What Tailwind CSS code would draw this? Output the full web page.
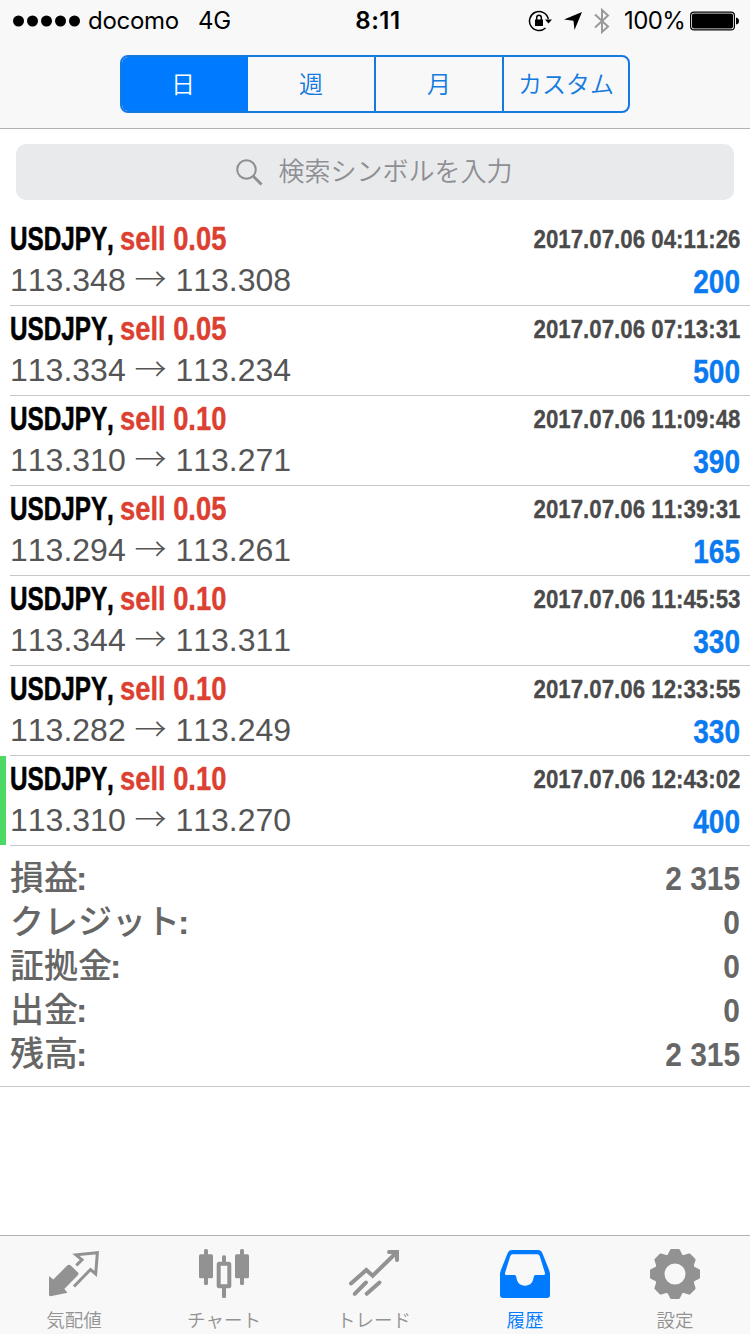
<!DOCTYPE html>
<html lang="ja">
<head>
  <meta charset="UTF-8" />
  <meta name="viewport" content="width=device-width, initial-scale=1" />
  <title>履歴</title>
  <script src="https://cdn.jsdelivr.net/npm/@tailwindcss/browser@4"></script>
</head>
<body class="w-[750px] h-[1334px] overflow-hidden flex flex-col bg-white font-['Liberation_Sans','Noto_Sans_CJK_JP',sans-serif]">
  <header class="h-[129px] shrink-0 bg-[#f8f8f8] border-b border-[#b2b2b2]">
    <!-- Status bar -->
    <div class="h-10 grid grid-cols-3 text-black font-['Inter',sans-serif] text-[24px] leading-10 whitespace-nowrap">
      <div class="flex items-center pl-[13px]">
        <svg class="w-[68px] h-3 shrink-0" viewBox="0 0 68 12">
          <circle cx="5.5" cy="6" r="5.5" /><circle cx="19.5" cy="6" r="5.5" /><circle cx="33.5" cy="6" r="5.5" /><circle cx="47.5" cy="6" r="5.5" /><circle cx="61.5" cy="6" r="5.5" />
        </svg>
        <span class="ml-[7px] w-[110px] pt-px tracking-[-0.3px]">docomo</span>
        <span class="pt-px tracking-[-0.3px]">4G</span>
      </div>
      <div class="text-center font-semibold pt-px pl-[6px] tracking-[0.5px]">8:11</div>
      <div class="flex items-center justify-end pr-[11px]">
        <svg class="w-6 h-6 shrink-0" viewBox="0 0 24 24" fill="none" stroke="#000" stroke-width="1.5">
          <path d="M17.5 19A9.5 9.5 0 1 1 20.3 10" />
          <path d="M17 10.5h7l-3.500 4z" fill="#000" stroke="none" />
          <rect x="7" y="10.500" width="8" height="6.500" fill="#000" stroke="none" />
          <path d="M8.700 11V8.500a2.300 2.300 0 0 1 4.600 0V11" />
        </svg>
        <svg class="w-[18px] h-[18px] ml-[12px] shrink-0" viewBox="0 0 18 18"><path d="M18 0L10.500 18L9.500 8.800L0 7.500z" /></svg>
        <svg class="w-4 h-[26px] ml-3 shrink-0" viewBox="0 0 16 26" fill="none" stroke="#999" stroke-width="2"><path d="M1 6.500L14 18.500L8 24V2L14 7.500L1 19.500" /></svg>
        <span class="ml-[14px] w-[66px] pt-px tracking-[-0.6px]">100%</span>
        <svg class="w-[49px] h-5 shrink-0" viewBox="0 0 49 20">
          <rect x="0.600" y="1.100" width="43.800" height="17.800" rx="3.500" fill="none" stroke="#000" stroke-width="1.200" />
          <rect x="2" y="2.500" width="41" height="15" rx="2" />
          <path d="M46 6.500q3 0.500 3 3.500t-3 3.500z" />
        </svg>
      </div>
    </div>
    <!-- Period switch -->
    <div class="mt-[15px] mx-auto w-[510px] h-[58px] grid grid-cols-[126px_128px_128px_124px] rounded-[8px] border-2 border-[#147ae0] bg-[#f8f8f8] overflow-hidden text-center text-[24px] leading-[52px] font-[350] text-[#147ae0] font-['Noto_Sans_CJK_JP',sans-serif]">
      <div class="bg-[#007aff] text-white pr-1">日</div>
      <div class="border-r-2 border-[#147ae0]">週</div>
      <div class="border-r-2 border-[#147ae0]">月</div>
      <div>カスタム</div>
    </div>
  </header>

  <div class="mt-[15px] mx-4 h-14 shrink-0 rounded-[10px] bg-[#e9eaec] flex items-center justify-center text-[#8e8e93]">
    <svg class="w-[27px] h-[27px]" viewBox="0 0 27 27" fill="none" stroke="#8e8e93" stroke-width="2"><circle cx="10.500" cy="10.500" r="9.300" /><path d="M17.300 17.300L25.500 25.500" stroke-width="2.800" /></svg>
    <span class="ml-[15px] mr-px text-[26px] font-[350] leading-[52px] pb-1 font-['Noto_Sans_CJK_JP',sans-serif]">検索シンボルを入力</span>
  </div>

  <ul id="deals" class="mt-4 shrink-0"></ul>
  <dl id="summary" class="shrink-0 py-[10px] px-[10px] h-[241px] border-b border-[#c8c7cc] text-[#666]"></dl>

  <nav class="mt-auto h-[99px] shrink-0 bg-[#f8f8f8] border-t border-[#b2b2b2] grid grid-cols-5 text-center text-[18.5px] leading-6 font-[350] text-[#929292] font-['Noto_Sans_CJK_JP',sans-serif]">
    <a class="flex flex-col items-center pt-[13px] pr-0.5">
      <svg class="w-[50px] h-[50px]" viewBox="0 0 50 50" fill="none">
        <path d="M0 27L4.300 30.500L18.500 16.300Q20 15 21.500 16.300L29 23.500Q30 24.700 29 26L15.300 40L18.500 43.700L1.500 47.200Q0 47 0 45.500z" fill="#929292" />
        <path d="M25 37.500L41.500 20.500L46.700 25L48.400 3.700L27 5.800L33 10.800L27.300 16.300" stroke="#929292" stroke-width="3" />
      </svg>
      <span class="mt-2">気配値</span>
    </a>
    <a class="flex flex-col items-center pt-[13px] pr-0.5">
      <svg class="w-[50px] h-[50px]" viewBox="0 0 50 50" fill="#929292">
        <rect x="0" y="5.300" width="14" height="24" rx="1.500" /><rect x="5" y="0" width="4" height="36" rx="1.500" />
        <rect x="36" y="5.300" width="14" height="24" rx="1.500" /><rect x="41" y="0" width="4" height="36" rx="1.500" />
        <rect x="23" y="6.300" width="4" height="9" rx="1.500" /><rect x="23" y="37" width="4" height="12" rx="1.500" />
        <rect x="19.700" y="14.700" width="10.600" height="22.600" rx="0.500" fill="none" stroke="#929292" stroke-width="4" />
      </svg>
      <span class="mt-2">チャート</span>
    </a>
    <a class="flex flex-col items-center pt-[13px] pr-0.5">
      <svg class="w-[50px] h-[50px]" viewBox="0 0 50 50" fill="none" stroke="#929292" stroke-width="4" stroke-linecap="round">
        <path d="M2 34.500L17.300 21L23.700 26.700L47 4" />
        <path d="M40 3H48V11" />
        <path d="M17 33.500L5.700 44.800M30.500 33.500L17.700 44.800" />
      </svg>
      <span class="mt-2">トレード</span>
    </a>
    <a class="flex flex-col items-center pt-[13px] text-[#007aff]">
      <svg class="w-[50px] h-[50px]" viewBox="0 0 50 50" fill="#007aff" fill-rule="evenodd">
        <path d="M12 1H38Q41 1 42.300 4L48.700 20Q50 23 50 26V46Q50 49 47 49H3Q0 49 0 46V26Q0 23 1.300 20L7.700 4Q9 1 12 1zM12.500 5.300Q11 5.300 10.300 7L5 24Q4.600 26 6.500 26H14.500Q16 26 16.300 28C17 33.500 20 36.700 25 36.700S33 33.500 33.700 28Q34 26 35.500 26H43.500Q45.400 26 45 24L39.700 7Q39 5.300 37.500 5.300z" />
      </svg>
      <span class="mt-2">履歴</span>
    </a>
    <a class="flex flex-col items-center pt-[13px]">
      <svg class="w-[50px] h-[50px]" viewBox="-25 -25 50 50" fill="#929292" stroke="#929292" stroke-linejoin="round">
        <circle r="15.500" fill="none" stroke-width="10" />
        <g id="teeth" stroke-width="3"></g>
      </svg>
      <span class="mt-2">設定</span>
    </a>
  </nav>

  <script>
    const deals = [
      { lots: "0.05", open: "113.348", close: "113.308", time: "2017.07.06 04:11:26", profit: "200" },
      { lots: "0.05", open: "113.334", close: "113.234", time: "2017.07.06 07:13:31", profit: "500" },
      { lots: "0.10", open: "113.310", close: "113.271", time: "2017.07.06 11:09:48", profit: "390" },
      { lots: "0.05", open: "113.294", close: "113.261", time: "2017.07.06 11:39:31", profit: "165" },
      { lots: "0.10", open: "113.344", close: "113.311", time: "2017.07.06 11:45:53", profit: "330" },
      { lots: "0.10", open: "113.282", close: "113.249", time: "2017.07.06 12:33:55", profit: "330" },
      { lots: "0.10", open: "113.310", close: "113.270", time: "2017.07.06 12:43:02", profit: "400", latest: true }
    ];

    const summary = [
      ["損益", "2 315"],
      ["クレジット", "0"],
      ["証拠金", "0"],
      ["出金", "0"],
      ["残高", "2 315"]
    ];

    document.getElementById("deals").innerHTML = deals.map(d => `
      <li class="flex h-[90px] whitespace-nowrap [font-kerning:none]">
        <div class="w-[6px] h-[89px] ${d.latest ? "bg-[#4cd964]" : ""}"></div>
        <div class="ml-1 flex-1 pr-[10px] border-b border-[#c8c7cc]">
          <div class="flex h-[43px] leading-[46px] font-bold">
            <div class="w-[110px] text-[33px] text-black [-webkit-text-stroke:0.6px_#000]"><span class="inline-block origin-left scale-x-[0.735]">USDJPY,</span></div>
            <div class="w-[120px] text-[33px] text-[#dc4030] [-webkit-text-stroke:0.4px_#dc4030]"><span class="inline-block origin-left scale-x-[0.828]">sell ${d.lots}</span></div>
            <div class="flex-1 flex justify-end text-[26px] text-[#4a4a4a] [-webkit-text-stroke:0.3px_#4a4a4a]"><span class="inline-block origin-right scale-x-[0.857]">${d.time}</span></div>
          </div>
          <div class="flex justify-between h-[46px] text-[32px]">
            <div class="leading-[43px] text-[#555]">${d.open} <span class="font-light leading-none font-['Noto_Sans_CJK_JP']">→</span> ${d.close}</div>
            <div class="text-[33px] leading-[45px] font-bold text-[#0a7af0] [-webkit-text-stroke:0.4px_#0a7af0]"><span class="inline-block origin-right scale-x-[0.85]">${d.profit}</span></div>
          </div>
        </div>
      </li>`).join("");

    document.getElementById("summary").innerHTML = summary.map(([label, value]) => `
      <div class="flex justify-between h-[44px] leading-[44px]">
        <dt class="text-[34px] leading-[45px] font-medium font-['Liberation_Sans','Noto_Sans_CJK_JP',sans-serif]">${label}<b class="font-bold -ml-0.5">:</b></dt>
        <dd class="text-[34px] font-bold"><span class="inline-block origin-right scale-x-[0.88]">${value}</span></dd>
      </div>`).join("");

    document.getElementById("teeth").innerHTML = [0, 45, 90, 135, 180, 225, 270, 315]
      .map(a => `<path d="M-6.500 -17.500L-3.500 -23.500H3.500L6.500 -17.500z" transform="rotate(${a})" />`).join("");
  </script>
</body>
</html>
